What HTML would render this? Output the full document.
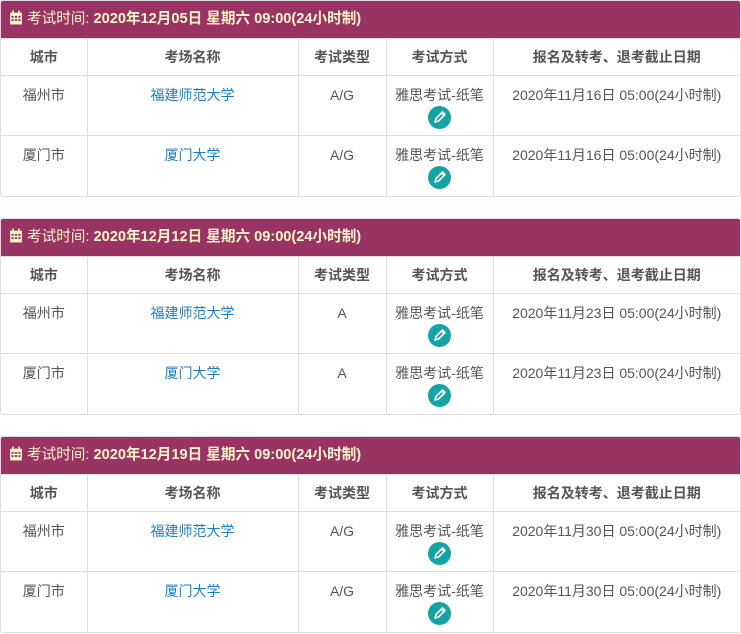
<!DOCTYPE html><html><head><meta charset="utf-8"><style>
body{margin:0;width:741px;height:634px;background:#fff;font-family:"Liberation Sans","Noto Sans CJK SC",sans-serif;font-size:14px;color:#555;overflow:hidden}
.b{position:absolute;left:0;width:739px;border:1px solid #ddd;border-radius:3px;overflow:hidden}
.h{height:37px;background:#983363;color:#fff6c8;line-height:37px;padding-left:8px;font-size:14.6px;white-space:nowrap}
.h b{font-weight:bold}
table{border-collapse:collapse;width:100%;table-layout:fixed}
td,th{border:1px solid #ddd;text-align:center;vertical-align:top;padding:0}
td:first-child,th:first-child{border-left:none}
td:last-child,th:last-child{border-right:none}
tr:last-child td{border-bottom:none}
th{height:36px;line-height:36px;font-weight:bold;color:#555}
td{height:60px;padding-top:10px;box-sizing:border-box;line-height:18px}
td.n{color:#1d7fc2}
.p{display:block;width:23px;height:23px;border-radius:50%;background:#15a3a5;margin:2px auto 0;position:relative}
</style></head><body>
<div id="c"></div>
<script>
const pen='<span class="p"><svg width="23" height="23" viewBox="0 0 23 23"><path d="M7 16l1-3.5 6.5-6.5 2.5 2.5-6.5 6.5z M13.5 7l2.5 2.5" fill="none" stroke="#fff" stroke-width="1.6" stroke-linejoin="round"/></svg></span>';
const cal='<svg width="14" height="15" viewBox="0 0 13 14" style="vertical-align:-2px;margin-right:4px"><rect x="1" y="2.5" width="11" height="11" fill="#fff6c8"/><rect x="3" y="0.5" width="1.5" height="3" fill="#fff6c8"/><rect x="8.5" y="0.5" width="1.5" height="3" fill="#fff6c8"/><g fill="#983363"><rect x="2.3" y="5.5" width="2" height="1.8"/><rect x="5.5" y="5.5" width="2" height="1.8"/><rect x="8.7" y="5.5" width="2" height="1.8"/><rect x="2.3" y="8.5" width="2" height="1.8"/><rect x="5.5" y="8.5" width="2" height="1.8"/><rect x="8.7" y="8.5" width="2" height="1.8"/></g></svg>';
const d=[["2020年12月05日","A/G","2020年11月16日"],["2020年12月12日","A","2020年11月23日"],["2020年12月19日","A/G","2020年11月30日"]];
let h='';d.forEach((x,i)=>{const row=(c,n)=>`<tr><td>${c}</td><td class="n">${n}</td><td>${x[1]}</td><td>雅思考试-纸笔${pen}</td><td>${x[2]} 05:00(24小时制)</td></tr>`;
h+=`<div class="b" style="top:${i*218}px"><div class="h">${cal}考试时间: <b>${x[0]} 星期六 09:00(24小时制)</b></div><table><colgroup><col style="width:86px"><col style="width:211px"><col style="width:88px"><col style="width:107px"><col></colgroup><tr><th>城市</th><th>考场名称</th><th>考试类型</th><th>考试方式</th><th>报名及转考、退考截止日期</th></tr>${row("福州市","福建师范大学")}${row("厦门市","厦门大学")}</table></div>`;});
document.getElementById('c').innerHTML=h;
</script></body></html>
